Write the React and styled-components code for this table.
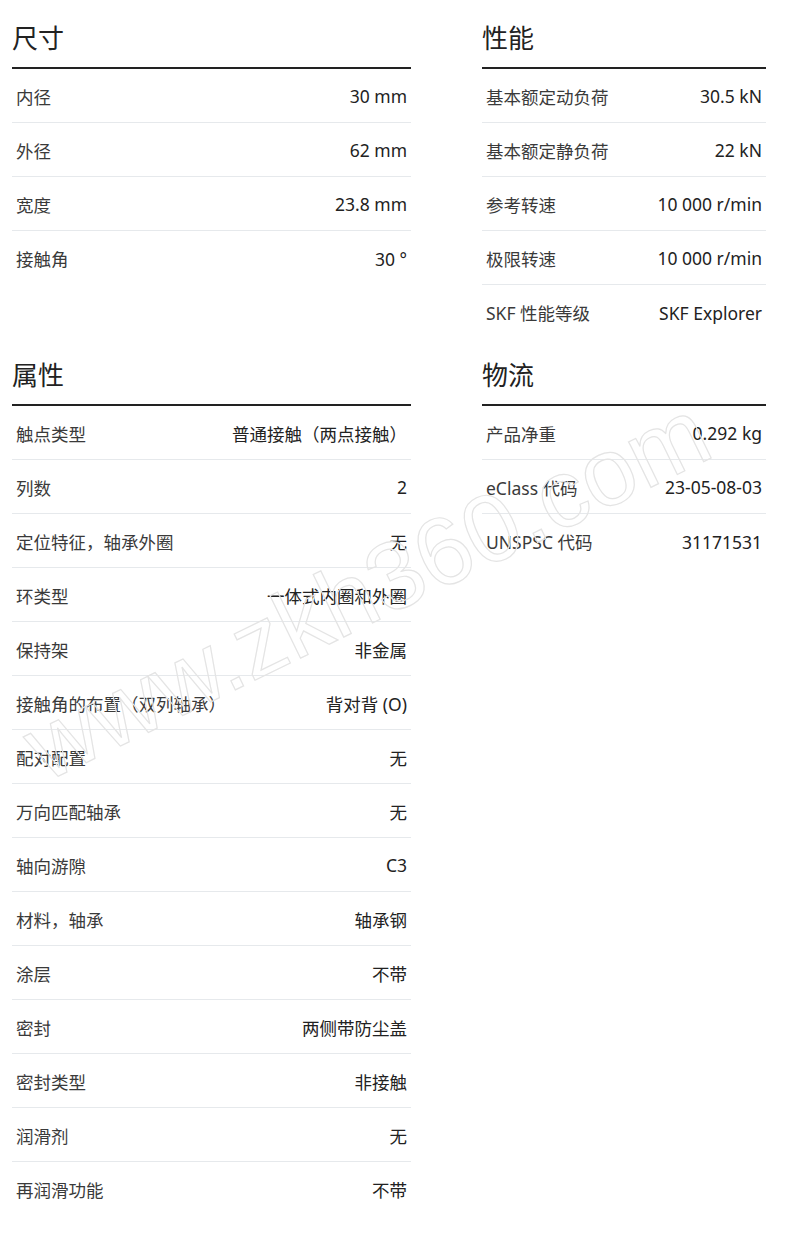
import styled, { createGlobalStyle } from 'styled-components';

const GlobalStyle = createGlobalStyle`
  body {
    margin: 0;
    background: #fff;
    font-family: "Noto Sans", "Noto Sans CJK SC", sans-serif;
  }
`;

const dimensions = [
  ['内径', '30 mm'],
  ['外径', '62 mm'],
  ['宽度', '23.8 mm'],
  ['接触角', '30 °'],
];

const performance = [
  ['基本额定动负荷', '30.5 kN'],
  ['基本额定静负荷', '22 kN'],
  ['参考转速', '10 000 r/min'],
  ['极限转速', '10 000 r/min'],
  ['SKF 性能等级', 'SKF Explorer'],
];

const properties = [
  ['触点类型', '普通接触（两点接触）'],
  ['列数', '2'],
  ['定位特征，轴承外圈', '无'],
  ['环类型', '一体式内圈和外圈'],
  ['保持架', '非金属'],
  ['接触角的布置（双列轴承）', '背对背 (O)'],
  ['配对配置', '无'],
  ['万向匹配轴承', '无'],
  ['轴向游隙', 'C3'],
  ['材料，轴承', '轴承钢'],
  ['涂层', '不带'],
  ['密封', '两侧带防尘盖'],
  ['密封类型', '非接触'],
  ['润滑剂', '无'],
  ['再润滑功能', '不带'],
];

const logistics = [
  ['产品净重', '0.292 kg'],
  ['eClass 代码', '23-05-08-03'],
  ['UNSPSC 代码', '31171531'],
];

function Section({ title, rows }) {
  return (
    <Block>
      <Heading>{title}</Heading>
      {rows.map(([label, value]) => (
        <Row key={label}>
          <Label>{label}</Label>
          <Value>{value}</Value>
        </Row>
      ))}
    </Block>
  );
}

export default function App() {
  return (
    <Page>
      <GlobalStyle />
      <Grid>
        <Section title="尺寸" rows={dimensions} />
        <Section title="性能" rows={performance} />
        <Section title="属性" rows={properties} />
        <Section title="物流" rows={logistics} />
      </Grid>
      <Watermark>www.zkh360.com</Watermark>
    </Page>
  );
}

const Page = styled.div`
  position: relative;
  width: 800px;
  height: 1233px;
  overflow: hidden;
  padding-top: 2px;
  box-sizing: border-box;
`;

const Grid = styled.div`
  display: grid;
  grid-template-columns: 399px 284px;
  column-gap: 71px;
  padding-left: 12px;
  align-items: start;
`;

const Block = styled.section`
  display: flex;
  flex-direction: column;
`;

const Heading = styled.h2`
  margin: 0;
  padding: 17px 0 12px;
  font-size: 26px;
  line-height: 36px;
  font-weight: 400;
  color: #222;
  border-bottom: 2px solid #222;
  font-family: "Noto Sans CJK SC", sans-serif;
`;

const Row = styled.div`
  display: flex;
  align-items: center;
  justify-content: space-between;
  height: 54px;
  box-sizing: border-box;
  padding: 1px 4px 0 4px;
  border-bottom: 1px solid #e6e9ec;
  font-size: 17.5px;
  color: #333;

  &:last-child {
    border-bottom: none;
  }
`;

const Label = styled.span`
  color: #3a3a3a;
`;

const Value = styled.span`
  color: #222;
  text-align: right;
`;

const Watermark = styled.div`
  position: absolute;
  left: 52px;
  top: 700px;
  font-family: "Liberation Sans", Arial, sans-serif;
  font-size: 96px;
  line-height: 1;
  white-space: nowrap;
  color: transparent;
  -webkit-text-stroke: 1.2px #e4e4e4;
  transform: rotate(-26deg);
  transform-origin: left bottom;
  pointer-events: none;
`;
